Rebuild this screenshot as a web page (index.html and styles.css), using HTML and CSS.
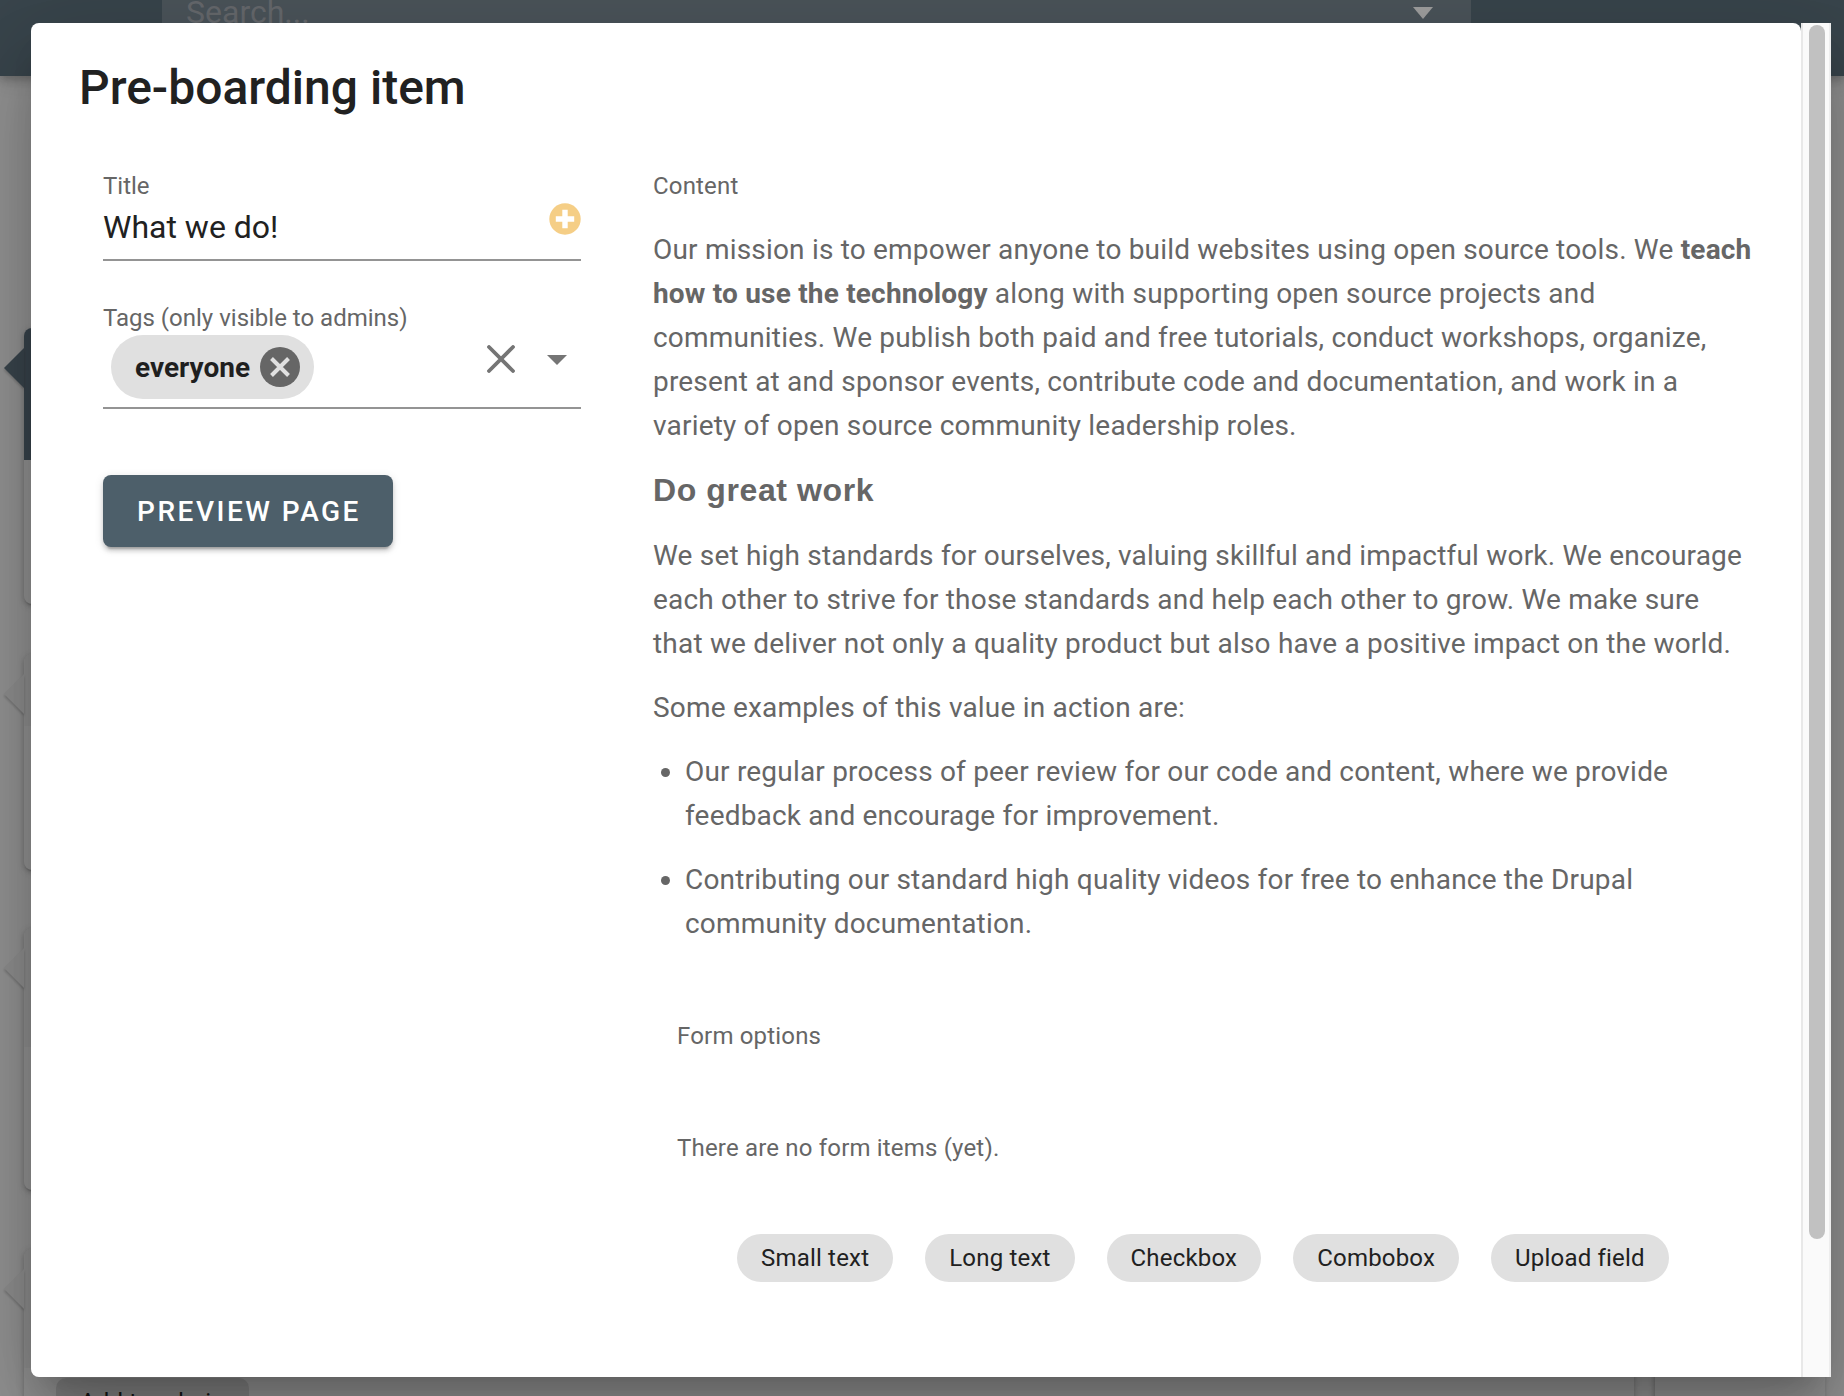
FILE: index.html
```html
<!DOCTYPE html>
<html lang="en">
<head>
<meta charset="utf-8">
<title>Pre-boarding item</title>
<link rel="stylesheet" href="styles.css">
</head>
<body>
<div class="page">
  <header class="topbar">
    <div class="search"><span class="search-text">Search...</span>
      <svg class="search-caret" viewBox="0 0 20 12"><path d="M0 0h20L10 12z"/></svg>
    </div>
  </header>
  <main class="timeline">
    <section class="entry entry-dark"><div class="entry-head"></div></section>
    <section class="entry entry-second"><div class="entry-head"></div></section>
    <section class="entry entry-third"><div class="entry-head"></div></section>
    <section class="entry entry-last"><div class="entry-head"></div><span class="add-chip">Add to admin</span></section>
    <div class="side-panel"></div>
  </main>
</div>
<div class="overlay">
  <div class="dialog">
    <div class="card">
      <h1 class="card-title">Pre-boarding item</h1>
      <div class="columns">
        <div class="fields">
          <div class="field">
            <label class="label">Title</label>
            <div class="field-row"><span class="value">What we do!</span>
              <svg class="plus" viewBox="0 0 32 32"><circle cx="16" cy="16" r="15.700" fill="#f5ce86"/><path d="M16 9.500v13M9.500 16h13" stroke="#fff" stroke-width="5.400" stroke-linecap="square"/></svg>
            </div>
          </div>
          <div class="field field-tags">
            <label class="label">Tags (only visible to admins)</label>
            <div class="tag-row">
              <span class="tag">everyone
                <svg class="tag-close" viewBox="0 0 40 40"><circle cx="20" cy="20" r="20" fill="#666"/><path d="M11.500 11.500l17 17M28.500 11.500l-17 17" stroke="#e0e0e0" stroke-width="4"/></svg>
              </span>
              <svg class="clear" viewBox="0 0 28 28"><path d="M2 2l24 24M26 2l-24 24" stroke="#757575" stroke-width="3.800" stroke-linecap="round"/></svg>
              <svg class="caret" viewBox="0 0 20 10"><path d="M0 0h20L10 10z" fill="#757575"/></svg>
            </div>
          </div>
          <button class="preview">Preview page</button>
        </div>
        <div class="content">
          <div class="label content-label">Content</div>
          <div class="prose">
            <p>Our mission is to empower anyone to build websites using open source tools. We <strong>teach how to use the technology</strong> along with supporting open source projects and communities. We publish both paid and free tutorials, conduct workshops, organize, present at and sponsor events, contribute code and documentation, and work in a variety of open source community leadership roles.</p>
            <h3>Do great work</h3>
            <p>We set high standards for ourselves, valuing skillful and impactful work. We encourage each other to strive for those standards and help each other to grow. We make sure that we deliver not only a quality product but also have a positive impact on the world.</p>
            <p>Some examples of this value in action are:</p>
            <ul>
              <li>Our regular process of peer review for our code and content, where we provide feedback and encourage for improvement.</li>
              <li>Contributing our standard high quality videos for free to enhance the Drupal community documentation.</li>
            </ul>
          </div>
          <div class="form-options">
            <div class="form-label">Form options</div>
            <div class="form-label form-empty">There are no form items (yet).</div>
            <div class="chips">
              <span class="chip">Small text</span><span class="chip">Long text</span><span class="chip">Checkbox</span><span class="chip">Combobox</span><span class="chip">Upload field</span>
            </div>
          </div>
        </div>
      </div>
    </div>
    <div class="scrollbar"><div class="thumb"></div></div>
  </div>
</div>
</body>
</html>
```
FILE: styles.css
```css
* { box-sizing: border-box; }
body {
  margin: 0;
  width: 1844px;
  height: 1396px;
  overflow: hidden;
  position: relative;
  font-family: Roboto, "Liberation Sans", sans-serif;
  background: #939393;
}
.page { width: 1844px; height: 1396px; overflow: hidden; }
.topbar {
  height: 76px;
  padding-left: 162px;
  position: relative;
  z-index: 1;
  background: #39454c;
  box-shadow: 0 4px 8px rgba(0,0,0,.2), 0 4px 20px rgba(0,0,0,.12);
}
.search {
  width: 1309px;
  height: 60px;
  padding: 0 38px 0 24px;
  display: flex;
  justify-content: space-between;
  background: #4b545a;
}
.search-text { font-size: 32px; line-height: 32px; margin-top: -4px; color: #66696d; }
.search-caret { width: 20px; height: 12px; margin-top: 7px; fill: #a0a0a0; }
.timeline { position: relative; padding: 252px 0 0 24px; }
.entry {
  position: relative;
  width: 1610px;
  height: 276px;
  border-radius: 8px;
  margin-bottom: 50px;
  background: #939393;
  box-shadow: 0 3px 2px -2px rgba(0,0,0,.2), 0 2px 4px rgba(0,0,0,.14), 0 2px 8px rgba(0,0,0,.12);
}
.entry-head { height: 132px; border-radius: 8px 8px 0 0; background: #8e8e8e; }
.entry::before {
  content: "";
  position: absolute;
  left: -20px;
  top: 20px;
  border: 20px solid transparent;
  border-left: 0;
  border-right-color: #8e8e8e;
  filter: drop-shadow(0 2px 1px rgba(0,0,0,.2));
}
.entry-dark .entry-head { background: #39444c; }
.entry-dark::before { border-right-color: #39444c; }
.entry-second { height: 216px; margin-bottom: 58px; }
.entry-second .entry-head { height: 72px; }
.entry-third { height: 262px; margin-bottom: 59px; }
.entry-third .entry-head { height: 119px; }
.entry-last { height: 300px; }
.entry-last .entry-head { height: 119px; }
.add-chip {
  display: block;
  width: 193px;
  height: 48px;
  margin: 10px 0 0 32px;
  padding-left: 24px;
  border-radius: 10px;
  background: #828282;
  font-size: 24px;
  line-height: 48px;
  letter-spacing: .17px;
  color: #161616;
}
.side-panel { position: absolute; left: 1655px; top: 252px; width: 170px; height: 1300px; background: #939393; box-shadow: -1px 2px 5px rgba(0,0,0,.25); }

.overlay { position: absolute; z-index: 2; inset: 0; padding: 23px 13px 19px 31px; }
.dialog {
  display: flex;
  height: 1354px;
  border-radius: 8px;
  box-shadow: 0 22px 30px -14px rgba(0,0,0,.2), 0 48px 76px 6px rgba(0,0,0,.14), 0 18px 92px 16px rgba(0,0,0,.12);
}
.card { width: 1770px; border-radius: 8px 8px 0 8px; background: #fff; }
.card-title { margin: 0; padding: 33px 48px 0; font-size: 48px; line-height: 64px; font-weight: 500; color: #212121; }
.columns { display: flex; padding: 46px 48px 0 72px; }
.fields { width: 478px; margin-right: 72px; flex: none; }
.label { display: block; font-size: 24px; line-height: 40px; color: #666; }
.content-label { letter-spacing: .17px; }
.field { height: 95px; border-bottom: 2px solid #949494; }
.field-row { display: flex; justify-content: space-between; }
.value { font-size: 32px; line-height: 40px; color: #212121; margin-top: 1px; }
.plus { width: 32px; height: 32px; margin-top: -3px; }
.field-tags { margin-top: 37px; height: 111px; }
.tag-row { display: flex; align-items: flex-start; padding-left: 8px; }
.tag {
  display: flex;
  align-items: center;
  width: 203px;
  height: 64px;
  margin-top: -3px;
  padding-left: 24px;
  border-radius: 32px;
  background: #e0e0e0;
  font-size: 28px;
  font-weight: 700;
  color: #1f1f1f;
}
.tag-close { width: 40px; height: 40px; margin-left: 10px; }
.clear { width: 28px; height: 28px; margin: 7px 0 0 173px; }
.caret { width: 20px; height: 10px; margin: 17px 0 0 32px; }
.preview {
  display: block;
  width: 290px;
  height: 72px;
  margin-top: 66px;
  padding: 1px 0 0 2px;
  border: 0;
  border-radius: 8px;
  background: #4d5f6a;
  color: #fff;
  font: 500 28px/71px Roboto, sans-serif;
  letter-spacing: 2.5px;
  text-transform: uppercase;
  box-shadow: 0 6px 2px -4px rgba(0,0,0,.2), 0 4px 4px rgba(0,0,0,.14), 0 2px 10px rgba(0,0,0,.12);
}
.content { width: 1101px; flex: none; }
.prose { margin-top: 22px; font-size: 28px; line-height: 44px; letter-spacing: .192px; color: #666; }
.prose p { margin: 0 0 20px; }
.prose h3 { margin: 0 0 22px; font: 700 32px/44px "Liberation Sans", sans-serif; letter-spacing: .6px; }
.prose ul { margin: 0; padding-left: 32px; }
.prose li { margin-bottom: 20px; }
.form-options { padding: 50px 24px 0; }
.form-label { font-size: 24px; line-height: 40px; color: #666; letter-spacing: .18px; }
.form-empty { margin-top: 72px; }
.chips { display: flex; gap: 32px; margin: 66px 0 0 60px; }
.chip { height: 48px; padding: 0 24px; border-radius: 24px; background: #e0e0e0; font-size: 24px; line-height: 48px; letter-spacing: .19px; color: #212121; white-space: nowrap; }
.scrollbar { width: 30px; padding: 2px 0 0 6px; background: #fafafa; border-left: 2px solid #e8e8e8; border-right: 2px solid #ededed; }
.thumb { width: 16px; height: 1214px; border-radius: 8px; background: #c1c1c1; }
```
